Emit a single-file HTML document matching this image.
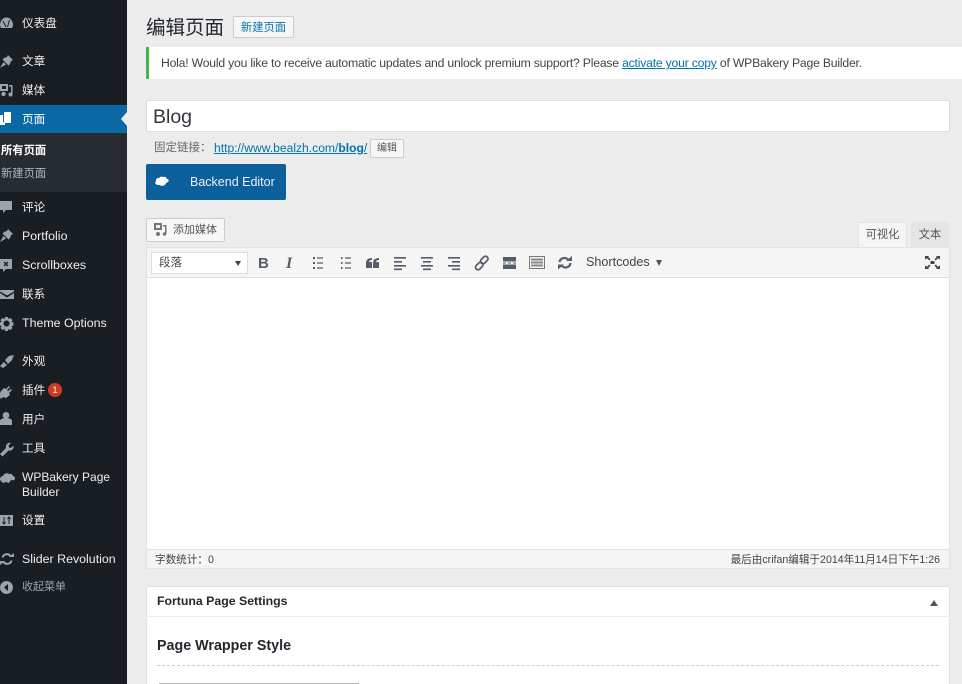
<!DOCTYPE html>
<html lang="zh"><head><meta charset="utf-8"><title>编辑页面</title>
<style>
html,body{margin:0;padding:0;width:962px;height:684px;overflow:hidden;background:#ececec}
body{position:relative;font-family:"Liberation Sans","Noto Sans CJK SC",sans-serif;font-size:13px;color:#444}
.a{position:absolute;white-space:nowrap}
.m{position:absolute;left:22px;color:#eee;font-size:12.400px;line-height:16px;white-space:nowrap}
.c{font-size:11.600px}
.i{position:absolute}
#side{position:absolute;left:0;top:0;width:127px;height:684px;background:#191e23}
svg{display:block}
</style></head><body>
<div id="side"></div>
<div class="a" style="left:0;top:105px;width:127px;height:28px;background:#0a68a5"></div>
<div class="a" style="left:0;top:133px;width:127px;height:59px;background:#272c31"></div>
<div class="a" style="left:121px;top:112px;width:0;height:0;border:7px solid transparent;border-left:0;border-right:6px solid #ececec"></div>

<div class="m c" style="top:16px">仪表盘</div>
<div class="m c" style="top:54px">文章</div>
<div class="m c" style="top:83px">媒体</div>
<div class="m c" style="top:112px;color:#fff">页面</div>
<div class="a" style="left:1px;top:143px;font-size:11.300px;line-height:16px;color:#fff;font-weight:bold">所有页面</div>
<div class="a" style="left:1px;top:166px;font-size:11.300px;line-height:16px;color:#b4b9be">新建页面</div>
<div class="m c" style="top:200px">评论</div>
<div class="m" style="top:228px">Portfolio</div>
<div class="m" style="top:257px">Scrollboxes</div>
<div class="m c" style="top:287px">联系</div>
<div class="m" style="top:315px">Theme Options</div>
<div class="m c" style="top:354px">外观</div>
<div class="m c" style="top:383px">插件</div>
<div class="a" style="left:48px;top:383px;width:14px;height:14px;border-radius:7px;background:#cf3a22;color:#fff;font-size:9px;line-height:14px;text-align:center">1</div>
<div class="m c" style="top:412px">用户</div>
<div class="m c" style="top:441px">工具</div>
<div class="m" style="top:470px;line-height:14.500px;font-size:12px">WPBakery Page<br>Builder</div>
<div class="m c" style="top:513px">设置</div>
<div class="m" style="top:551px">Slider Revolution</div>
<div class="m c" style="top:579px;color:#a0a5aa;font-size:11px">收起菜单</div>

<!-- sidebar icons -->
<svg class="i" style="left:0;top:0" width="20" height="600" fill="#9ea3a8">
<path d="M0 25a6.500 7.500 0 0 1 13 0c0 1-.5 2-1 3H1c-.5-1-1-2-1-3z"/><path d="M3 21l3 6M9.500 20l-2 7" stroke="#191e23" stroke-width="1" fill="none"/>
<path id="pin" transform="translate(0 55)" d="M8 0l5 5-2 1-1 3-1.500 1.500-6-6 1.500-1.500 3-1zM3.500 7l2.500 2.500L0 13z"/>
<path fill-rule="evenodd" d="M0 84h8v7H0zM2 86v3h4v-3z"/><path d="M9 85h3.500v9h-1.500v-7.500H9z"/><circle cx="3.500" cy="94" r="2.200"/><circle cx="10.500" cy="94.500" r="2"/>
<path d="M0 115h3v7h2v3H0z" fill="#fff"/><path d="M4 112h7v11H4z" fill="#fff"/>
<path d="M0 201h12v9H6l-3 3v-3H0z"/>
<path transform="translate(0 229)" d="M8 0l5 5-2 1-1 3-1.500 1.500-6-6 1.500-1.500 3-1zM3.500 7l2.500 2.500L0 13z"/>
<path d="M0 259h12v10H6l-3 3v-3H0z"/><path d="M4 262l4 4M8 262l-4 4" stroke="#191e23" stroke-width="1.300"/>
<path d="M0 290h14v1.500L7 295.500 0 291.500zM0 293l7 4.500 7-4.500V299H0z"/>
<path fill-rule="evenodd" d="M5 317h3l.5 2 2-1 2 2-1 2 2 .5v3l-2 .5 1 2-2 2-2-1-.5 2H5l-.5-2-2 1-2-2 1-2-1.500-.5v-3l1.500-.5-1-2 2-2 2 1zM6.500 320.500a3 3 0 1 0 .01 0z"/>
<path d="M0 366l4-4 3 3-4 3zM5 360l4-4 5-1-2 5-4 4z"/>
<path d="M1 395l2-4 3-3 2 1 3-3 1 1-3 3 1 1 3-2 1 1-3 3 1 2-4 3-3-1-2 2z" transform="translate(-2 0)"/>
<path d="M6 412a3.300 3.300 0 1 1-.01 0zM0 425v-4c0-2 3-3 6-3s6 1 6 3v4z"/>
<path d="M1 454l6-6a4 4 0 0 1 5-5l-2.500 2.500.5 2 2 .5 2.500-2.500a4 4 0 0 1-5 5l-6 6z" transform="translate(-1 0)"/>
<path d="M0 478a3 3 0 0 1 3-3 4 4 0 0 1 6-2 3 3 0 0 1 4 2 2.500 2.500 0 0 1 2 3c-1 2-3 1-4 1l-2 3-3-1-3 1-3-3z" transform="translate(0 1)"/>
<path d="M0 515h13v11H0z"/><path d="M4 517v7M2.500 522l1.500 2 1.500-2M9 524v-7M7.500 519l1.500-2 1.500 2" stroke="#191e23" stroke-width="1" fill="none"/>
<path d="M2.500 557.500a4.500 4.500 0 0 1 8-1.500M11.500 560.500a4.500 4.500 0 0 1-8 1.500" stroke="#9ea3a8" stroke-width="2" fill="none"/><path d="M9 557h5v-4zM5 561H0v4z"/>
<path fill-rule="evenodd" d="M6.500 581a6.500 6.500 0 1 1-.01 0zM8 584l-4 3.500 4 3.500z"/>
</svg>

<!-- header -->
<div class="a" style="left:146px;top:15px;font-size:19.500px;line-height:26px;color:#23282d">编辑页面</div>
<div class="a" style="left:233px;top:16px;width:59px;height:20px;border:1px solid #ccc;background:#f7f7f7;border-radius:2px;color:#0073aa;font-size:11.300px;line-height:22px;text-align:center">新建页面</div>

<!-- notice -->
<div class="a" style="left:146px;top:47px;width:816px;height:32px;background:#fff"></div>
<div class="a" style="left:146px;top:47px;width:3px;height:32px;background:#46b450"></div>
<div class="a" style="left:161px;top:55px;font-size:12.200px;letter-spacing:-.2px;line-height:16px;color:#444">Hola! Would you like to receive automatic updates and unlock premium support? Please <span style="color:#0073aa;text-decoration:underline">activate your copy</span> of WPBakery Page Builder.</div>

<!-- title -->
<div class="a" style="left:146px;top:100px;width:802px;height:30px;border:1px solid #ddd;background:#fff"></div>
<div class="a" style="left:153px;top:104px;font-size:19.500px;line-height:26px;color:#32373c">Blog</div>

<!-- permalink -->
<div class="a" style="left:154px;top:140px;font-size:11.500px;line-height:16px;color:#666">固定链接：</div>
<div class="a" style="left:214px;top:140px;font-size:12.100px;line-height:16px;color:#0073aa;text-decoration:underline">http://www.bealzh.com/<b>blog</b>/</div>
<div class="a" style="left:370px;top:139px;width:32px;height:17px;border:1px solid #ccc;background:#f7f7f7;border-radius:2px;color:#555;font-size:10px;line-height:17px;text-align:center">编辑</div>

<!-- backend editor -->
<div class="a" style="left:146px;top:164px;width:140px;height:36px;background:#0b5f9b;border-radius:2px;color:#eaf2f8;font-size:12.500px;line-height:36px;text-indent:44px">Backend Editor</div>
<svg class="i" style="left:155px;top:176px" width="15" height="12" fill="#fff"><path d="M1 5a2.500 2.500 0 0 1 3-3 3 3 0 0 1 4-1 3 3 0 0 1 4 2c2 0 2 2 1 3l-2 1-1 2-3 1-3-1-2 0-2-2z"/></svg>

<!-- add media -->
<div class="a" style="left:146px;top:218px;width:77px;height:22px;border:1px solid #ccc;background:#f7f7f7;border-radius:2px"></div>
<svg class="i" style="left:154px;top:223px" width="14" height="14" fill="#72777c"><path fill-rule="evenodd" d="M0 0h8v7H0zM2 2v3h4V2z"/><path d="M9 2h3.500v9H11V3.500H9z"/><circle cx="4" cy="11" r="2"/><circle cx="10.500" cy="11" r="1.800"/></svg>
<div class="a" style="left:173px;top:222px;font-size:11px;line-height:16px;color:#555">添加媒体</div>

<!-- tabs -->
<div class="a" style="left:858px;top:222px;width:49px;height:25px;background:#f5f5f5;border:1px solid #e5e5e5;border-bottom:0;box-sizing:border-box;color:#555;font-size:11.200px;line-height:25px;text-align:center">可视化</div>
<div class="a" style="left:911px;top:222px;width:38px;height:25px;background:#e5e5e5;color:#555;font-size:11.200px;line-height:26px;text-align:center">文本</div>

<!-- editor -->
<div class="a" style="left:146px;top:247px;width:802px;height:320px;border:1px solid #e2e2e2;background:#fff"></div>
<div class="a" style="left:147px;top:248px;width:802px;height:29px;background:#f5f5f5;border-bottom:1px solid #ddd"></div>
<div class="a" style="left:151px;top:252px;width:95px;height:20px;border:1px solid #ddd;background:#fff;font-size:11.500px;line-height:20px;color:#444;text-indent:7px">段落</div>
<div class="a" style="left:235px;top:261px;width:0;height:0;border:3.500px solid transparent;border-top:5px solid #444;border-bottom:0"></div>

<svg class="i" style="left:255px;top:253px" width="320" height="20" fill="#555d66" stroke="none">
<text x="3" y="15" font-family="Liberation Sans" font-size="15" font-weight="bold">B</text>
<text x="31" y="15" font-family="Liberation Serif" font-size="16" font-weight="bold" font-style="italic">I</text>
<g stroke="#555d66" stroke-width="1.200"><path d="M62 5h6M62 10h6M62 15h6M90 5h6M90 10h6M90 15h6"/></g>
<path d="M58 4h2v2h-2zM58 9h2v2h-2zM58 14h2v2h-2zM86 4h1.500v2H86zM86 9h1.500v2H86zM86 14h1.500v2H86z"/>
<path d="M111 10c0-3 2-5 6-5v2c-2 0-3 1-3 2h3v6h-6zM118 10c0-3 2-5 6-5v2c-2 0-3 1-3 2h3v6h-6z"/>
<path d="M139 4h12v1.600h-12zM139 8h8v1.600h-8zM139 12h12v1.600h-12zM139 15.500h8v1.600h-8z"/>
<path d="M166 4h12v1.600h-12zM168 8h8v1.600h-8zM166 12h12v1.600h-12zM168 15.500h8v1.600h-8z"/>
<path d="M193 4h12v1.600h-12zM197 8h8v1.600h-8zM193 12h12v1.600h-12zM197 15.500h8v1.600h-8z"/>
<g fill="none" stroke="#555d66" stroke-width="1.700"><rect x="220" y="10.500" width="8.500" height="5" rx="2.500" transform="rotate(-45 224.250 13)"/><rect x="225" y="4.500" width="8.500" height="5" rx="2.500" transform="rotate(-45 229.250 7)"/></g>
<path d="M248 4h13v4.500h-13zM248 9.500h3v1h-3zM253 9.500h3v1h-3zM258 9.500h3v1h-3zM248 11.500h13V16h-13z"/>
<path fill-rule="evenodd" d="M274 3h16v13h-16zM275 4v11h14V4z" fill="#777"/><path d="M276 5.500h12v2h-12zM276 8.500h12v2h-12zM276 11.500h12v2h-12z" fill="#888"/>
<path d="M304.500 9a5 5 0 0 1 8.500-2.500M315.500 10a5 5 0 0 1-8.500 3" fill="none" stroke="#555d66" stroke-width="2.200"/><path d="M311 8h6V3zM309 11.500h-6v5z"/>
</svg>
<div class="a" style="left:586px;top:254px;font-size:12.600px;line-height:16px;color:#444">Shortcodes</div>
<div class="a" style="left:656px;top:260px;width:0;height:0;border:3.500px solid transparent;border-top:6px solid #555;border-bottom:0"></div>
<svg class="i" style="left:925px;top:256px" width="15" height="13" fill="#444"><path d="M0 0h4L3.200 1 5.500 3.200 4.200 4.500 2 2.200 0 3.500zM15 0h-4l.8 1L9.500 3.200l1.300 1.300L13 2.200l2 1.300zM0 13h4l-.8-1 2.300-2.200L4.200 8.500 2 10.800 0 9.500zM15 13h-4l.8-1-2.300-2.200 1.300-1.300 2.200 2.300 2-1.300z"/><rect x="5.500" y="5" width="4" height="3"/></svg>

<!-- status bar -->
<div class="a" style="left:147px;top:549px;width:802px;height:19px;background:#f5f5f5;border-top:1px solid #e2e2e2;box-sizing:border-box"></div>
<div class="a" style="left:155px;top:552px;font-size:10.600px;line-height:16px;color:#444">字数统计：0</div>
<div class="a" style="right:22px;top:552px;font-size:10.600px;line-height:16px;color:#444">最后由crifan编辑于2014年11月14日下午1:26</div>

<!-- meta box -->
<div class="a" style="left:146px;top:586px;width:802px;height:110px;border:1px solid #e2e2e2;background:#fff"></div>
<div class="a" style="left:147px;top:616px;width:802px;height:1px;background:#eee"></div>
<div class="a" style="left:157px;top:593px;font-size:12.300px;line-height:16px;font-weight:bold;color:#23282d">Fortuna Page Settings</div>
<div class="a" style="left:930px;top:600px;width:0;height:0;border:4px solid transparent;border-bottom:6px solid #555;border-top:0"></div>
<div class="a" style="left:157px;top:636px;font-size:14.300px;line-height:20px;font-weight:bold;color:#23282d">Page Wrapper Style</div>
<div class="a" style="left:157px;top:665px;width:782px;height:0;border-top:1px dashed #ccc"></div>
<div class="a" style="left:159px;top:683px;width:200px;height:1px;background:#bbb"></div>
</body></html>
